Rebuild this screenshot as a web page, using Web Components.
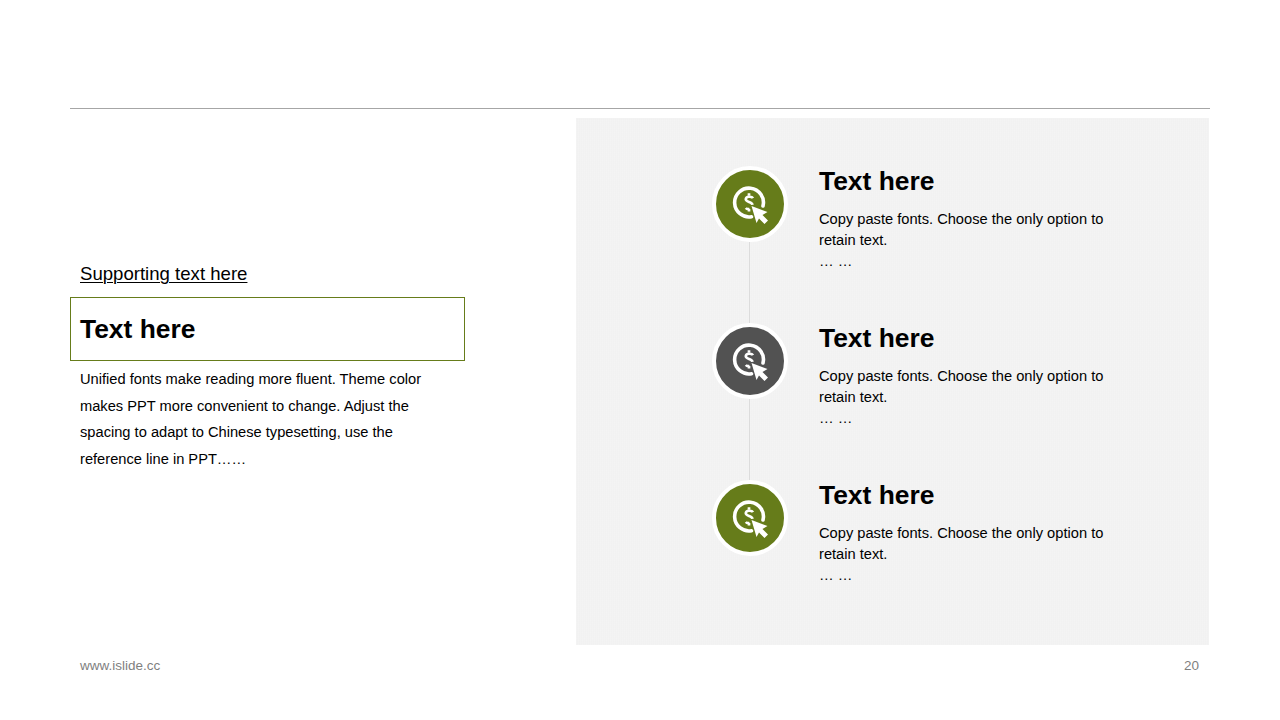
<!DOCTYPE html>
<html>
<head>
<meta charset="utf-8">
<title>Slide 20</title>
<style>
  html, body { margin: 0; background: #fff; }
  body { font-family: "Liberation Sans", Arial, sans-serif; color: #000; }
</style>
</head>
<body>
<slide-page>
  <support-block slot="left" label="Supporting text here" title="Text here">
    Unified fonts make reading more fluent. Theme color makes PPT more convenient to change. Adjust the spacing to adapt to Chinese typesetting, use the reference line in PPT……
  </support-block>
  <timeline-item slot="right" color="#667c1a" title="Text here" connected></timeline-item>
  <timeline-item slot="right" color="#525252" title="Text here" connected></timeline-item>
  <timeline-item slot="right" color="#667c1a" title="Text here"></timeline-item>
  <span slot="site">www.islide.cc</span>
  <span slot="page">20</span>
</slide-page>

<script>
class SlidePage extends HTMLElement {
  constructor() {
    super()
    this.attachShadow({ mode: 'open' })
    this.shadowRoot.innerHTML = `
      <style>
        :host {
          display: flex;
          flex-direction: column;
          box-sizing: border-box;
          width: 1280px;
          height: 720px;
          padding: 108px 70px 0;
          overflow: hidden;
        }
        .rule { height: 1px; background: #a6a6a6; }
        .main {
          display: flex;
          justify-content: space-between;
          height: 527px;
          margin: 9px 1px 0 0;
        }
        .left { width: 395px; padding-top: 144px; box-sizing: border-box; }
        .right {
          width: 633px;
          box-sizing: border-box;
          padding: 48px 0 0 136px;
          background-color: #f1f1f1;
          background-image:
            repeating-linear-gradient(90deg, rgba(255,255,255,.14) 0 1px, transparent 1px 2px),
            repeating-linear-gradient(0deg, rgba(255,255,255,.08) 0 1px, transparent 1px 2px);
        }
        footer {
          display: flex;
          justify-content: space-between;
          padding: 13px 11px 0 10px;
          font-size: 13.5px;
          line-height: 16px;
          color: #7f7f7f;
        }
      </style>
      <div class="rule"></div>
      <div class="main">
        <div class="left"><slot name="left"></slot></div>
        <div class="right"><slot name="right"></slot></div>
      </div>
      <footer><slot name="site"></slot><slot name="page"></slot></footer>
    `
  }
}

class SupportBlock extends HTMLElement {
  constructor() {
    super()
    this.attachShadow({ mode: 'open' })
  }

  connectedCallback() {
    this.shadowRoot.innerHTML = `
      <style>
        :host { display: block; }
        .label {
          padding-left: 10px;
          font-size: 18.6px;
          line-height: 24px;
          text-decoration: underline;
          text-underline-offset: 2px;
          text-decoration-thickness: 1px;
        }
        .box {
          box-sizing: border-box;
          height: 64px;
          margin-top: 11px;
          padding-left: 9px;
          border: 1px solid #667c1a;
          font-size: 26.4px;
          font-weight: 700;
          line-height: 63px;
        }
        .body {
          width: 352px;
          margin: 5px 0 0 10px;
          font-size: 14.67px;
          line-height: 26.5px;
        }
      </style>
      <div class="label">${this.getAttribute('label')}</div>
      <div class="box">${this.getAttribute('title')}</div>
      <div class="body"><slot></slot></div>
    `
  }
}

class TimelineItem extends HTMLElement {
  constructor() {
    super()
    this.attachShadow({ mode: 'open' })
  }

  connectedCallback() {
    const color = this.getAttribute('color')
    this.shadowRoot.innerHTML = `
      <style>
        :host {
          display: flex;
          gap: 31px;
          height: 157px;
        }
        .marker {
          display: flex;
          flex-direction: column;
          align-items: center;
          width: 76px;
        }
        .disc {
          display: flex;
          flex: none;
          align-items: center;
          justify-content: center;
          box-sizing: border-box;
          width: 76px;
          height: 76px;
          border: 4px solid #fff;
          border-radius: 50%;
          background: ${color};
        }
        .line { flex: 1; width: 1px; margin-right: 1px; background: #dcdcdc; }
        .text { width: 300px; }
        h3 {
          margin: 0;
          font-size: 26.4px;
          font-weight: 700;
          line-height: 31px;
        }
        p {
          margin: 12px 0 0;
          font-size: 14.67px;
          line-height: 21px;
        }
      </style>
      <div class="marker">
        <div class="disc">
          <svg width="68" height="68" viewBox="0 0 68 68" fill="none" stroke="#fff">
            <path d="M35.500 46.700A14.400 14.400 0 1 1 47 36" stroke-width="3.600" stroke-linecap="round"/>
            <path d="M37 28.200c-1-1.800-7-2.400-7.200 1-.2 3.200 6.400 2.400 6.600 5.600" stroke-width="2.700"/>
            <path d="M29.800 38c1 1.200 2.600 1.400 3.800 1M33 23.200v2.600M33 39v2.600" stroke-width="2.700"/>
            <path d="M35.500 36L51.500 42l-5 3 5.500 5.500-3.500 3.500-5.500-5.500-2.500 4.500z" fill="#fff" stroke="${color}" stroke-width="1" stroke-linejoin="round" paint-order="stroke"/>
          </svg>
        </div>
        ${this.hasAttribute('connected') ? '<div class="line"></div>' : ''}
      </div>
      <div class="text">
        <h3>${this.getAttribute('title')}</h3>
        <p>Copy paste fonts. Choose the only option to retain text.<br>… …</p>
      </div>
    `
  }
}

customElements.define('slide-page', SlidePage)
customElements.define('support-block', SupportBlock)
customElements.define('timeline-item', TimelineItem)
</script>
</body>
</html>
